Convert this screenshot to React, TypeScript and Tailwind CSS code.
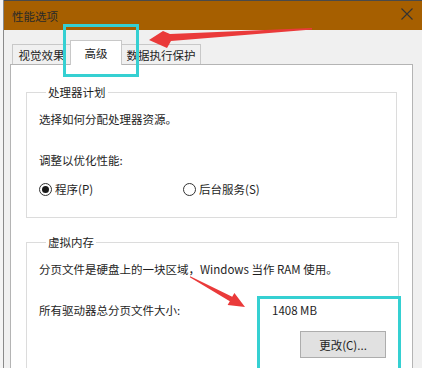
import React from "react";

function Radio({ checked, label }: { checked?: boolean; label: string }) {
  return (
    <div className="flex items-center gap-[3px]">
      <div className="w-[13px] h-[13px] rounded-full border border-[#333] bg-white flex items-center justify-center">
        {checked && <div className="w-[7px] h-[7px] rounded-full bg-[#1a1a1a]" />}
      </div>
      <span>{label}</span>
    </div>
  );
}

function GroupBox({ title, className, children }: { title: string; className?: string; children: React.ReactNode }) {
  return (
    <fieldset className={"border border-[#dcdcdc] mx-[15px] px-[12px] " + (className ?? "")}>
      <legend className="ml-[7px] px-[2px] leading-[16px]">{title}</legend>
      {children}
    </fieldset>
  );
}

export default function App() {
  return (
    <div className="relative w-[422px] h-[368px] overflow-hidden bg-[#f4f4f4] font-['Noto_Sans_CJK_SC',sans-serif] text-[11.5px] leading-[16px] text-[#1e1e1e]">
      <div className="ml-[3px] min-h-full border-l border-[#8a8a8a] bg-[#f0f0f0] flex flex-col">
        {/* title bar */}
        <div className="shrink-0 h-[30px] border-t border-t-[#4a4a4a] bg-yellow-700 flex items-center justify-between pl-[8px] pr-[9px]">
          <span className="text-[#2a2a2a]">性能选项</span>
          <svg width="12" height="12" viewBox="0 0 12 12" className="mb-[3px]">
            <path d="M0.5 0.5 L11.5 11.5 M11.5 0.5 L0.5 11.5" stroke="#333" strokeWidth="1.1" />
          </svg>
        </div>

        {/* tabs */}
        <div className="shrink-0 mt-[10px] h-[24px] ml-[8px] flex items-end">
          <div className="w-[58px] h-[20px] border-l border-t border-[#c8c8c8] bg-[#f0f0f0] flex items-center justify-center">
            视觉效果
          </div>
          <div className="relative top-[1px] z-10 w-[52px] h-[25px] border-l border-t border-r border-[#c8c8c8] bg-white flex justify-center pt-[4px]">
            高级
          </div>
          <div className="w-[79px] h-[20px] border-t border-r border-[#c8c8c8] bg-[#f0f0f0] flex items-center justify-center">
            数据执行保护
          </div>
        </div>

        {/* panel */}
        <div className="shrink-0 ml-[6px] w-[403px] h-[340px] border border-[#b4b4b4] bg-white">
          <GroupBox title="处理器计划" className="mt-[19px] pb-[20px]">
            <div className="pt-[11px]">选择如何分配处理器资源。</div>
            <div className="mt-[25px]">调整以优化性能:</div>
            <div className="mt-[13px] flex">
              <div className="w-[144px]">
                <Radio checked label="程序(P)" />
              </div>
              <Radio label="后台服务(S)" />
            </div>
          </GroupBox>

          <GroupBox title="虚拟内存" className="mt-[16px] pb-[20px]">
            <div className="pt-[11px]">分页文件是硬盘上的一块区域，Windows 当作 RAM 使用。</div>
            <div className="mt-[25px] flex">
              <span className="w-[233px]">所有驱动器总分页文件大小:</span>
              <span>1408 MB</span>
            </div>
            <div className="mt-[13px] ml-[261px] w-[86px] h-[27px] border border-[#adadad] bg-[#e1e1e1] flex items-center justify-center">
              更改(C)...
            </div>
          </GroupBox>
        </div>
      </div>

      {/* annotations */}
      <div className="absolute left-[63px] top-[24px] w-[76px] h-[53px] border-[3px] border-[#35d0d2] z-20" />
      <div className="absolute left-[257px] top-[296px] w-[144px] h-[100px] border-[3px] border-[#35d0d2] z-20" />
      <svg className="absolute left-0 top-0 z-20" width="422" height="368" viewBox="0 0 422 368">
        <polygon points="312,28 170,34 163,31 149,40 167,48 171,41 312,29.6" fill="#ea3a3a" />
        <polygon points="190.2,276.3 232.2,296.8 234.4,292.9 245,307 227.6,305 229.8,301.2 189.8,277.2" fill="#ea3a3a" />
      </svg>
    </div>
  );
}
